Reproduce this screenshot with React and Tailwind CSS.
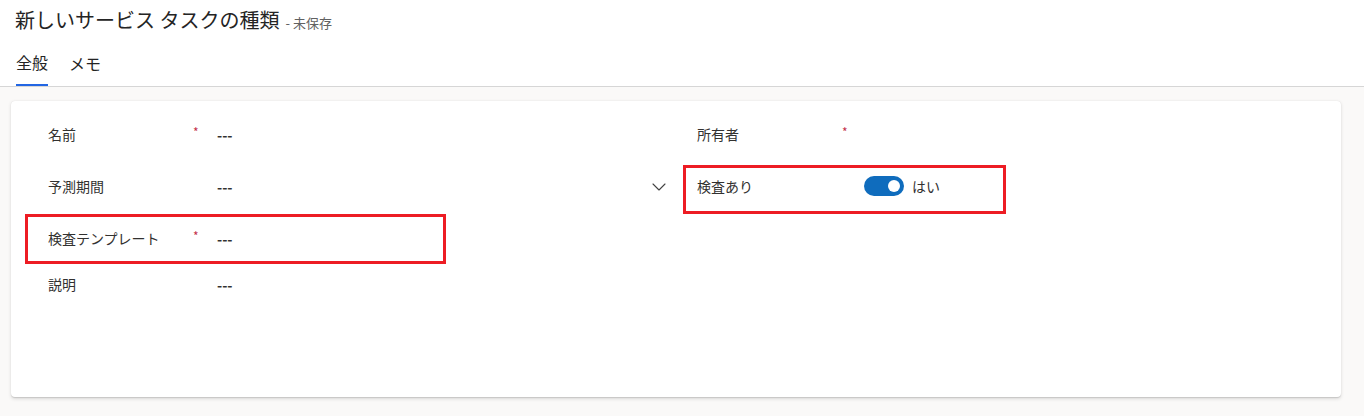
import { ChevronDown } from "lucide-react";

const font = { fontFamily: '"Noto Sans CJK JP", "Noto Sans", sans-serif' };

function Field({ label, required, children, h = "h-[52px]", after }) {
  return (
    <div className={`flex items-center ${h}`}>
      <div className="w-[145px] text-[14px] text-[#323130]">{label}</div>
      <div className="w-[24px] text-[12px] text-[#c4314b] -mt-1">{required ? "*" : ""}</div>
      <div className="flex-1 text-[14px] font-semibold text-[#323130] pt-[2px]">{children}</div>
      {after}
    </div>
  );
}

export default function App() {
  return (
    <div className="w-[1364px] h-[416px] bg-[#faf9f8] overflow-hidden" style={font}>
      {/* ヘッダー */}
      <div className="bg-white border-b border-[#d6d6d6]">
        <div className="h-[40px] pl-[15px] pt-[6px] flex items-baseline gap-[6px]">
          <span className="text-[20px] leading-[28px] text-[#242424]">新しいサービス タスクの種類</span>
          <span className="text-[13px] text-[#616161]">- 未保存</span>
        </div>
        <div className="flex pl-[16px] gap-[21px]">
          <div className="h-[46px] flex flex-col">
            <div className="flex-1 flex items-center text-[16px] text-[#242424]">全般</div>
            <div className="h-[2px] bg-[#2266e3]" />
          </div>
          <div className="h-[46px] flex flex-col">
            <div className="flex-1 flex items-center text-[16px] text-[#242424]">メモ</div>
          </div>
        </div>
      </div>

      {/* カード */}
      <div className="relative mt-[14px] ml-[11px] mr-[23px] h-[296px] bg-white rounded-[4px] shadow-[0_1.6px_3.6px_rgba(0,0,0,0.13),0_0.3px_0.9px_rgba(0,0,0,0.11)] pt-[7px] pl-[37px] flex">
        <div className="w-[635px]">
          <Field label="名前" required>---</Field>
          <Field
            label="予測期間"
            after={<ChevronDown className="w-[24px] h-[24px] mr-[12px] mt-[2px] text-[#424242]" strokeWidth={1.1} />}
          >
            ---
          </Field>
          <Field label="検査テンプレート" required>---</Field>
          <Field label="説明" h="h-[40px]">---</Field>
        </div>
        <div className="pl-[14px] w-[500px]">
          <Field label="所有者" required />
          <div className="flex items-center h-[52px]">
            <div className="w-[167px] text-[14px] text-[#323130]">検査あり</div>
            <div className="w-[40px] h-[20px] rounded-full bg-[#0f6cbd] flex items-center justify-end pr-[4px]">
              <div className="w-[12px] h-[12px] rounded-full bg-white" />
            </div>
            <span className="ml-[8px] text-[14px] text-[#323130]">はい</span>
          </div>
        </div>

        {/* 注釈の赤枠 */}
        <div className="absolute left-[14px] top-[113px] w-[421px] h-[50px] border-[3px] border-[#ed1c24]" />
        <div className="absolute left-[672px] top-[64px] w-[323px] h-[49px] border-[3px] border-[#ed1c24]" />
      </div>
    </div>
  );
}
